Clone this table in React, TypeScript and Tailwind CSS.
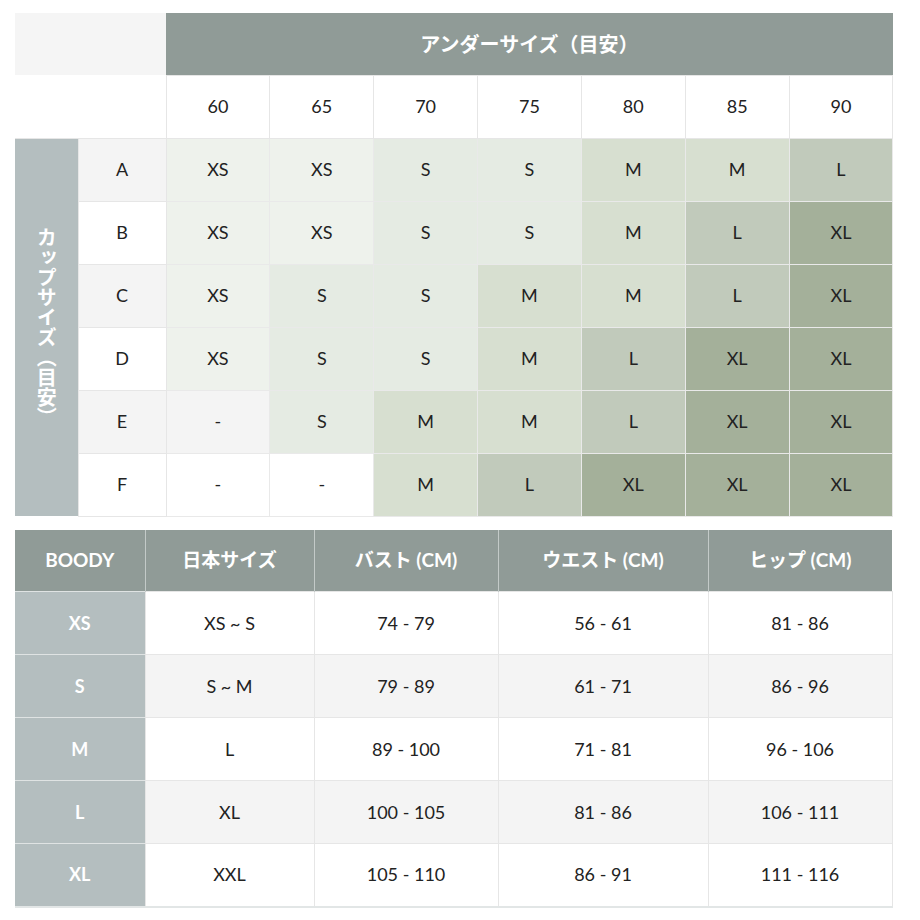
import React from 'react';

const SHADE: Record<string, string> = {
  XS: 'bg-[#eef2ec]',
  S: 'bg-[#e5ebe3]',
  M: 'bg-[#d7dfd0]',
  L: 'bg-[#c1cabb]',
  XL: 'bg-[#a4b09a]',
};

const UNDER = ['60', '65', '70', '75', '80', '85', '90'];

const CUPS: [string, string[]][] = [
  ['A', ['XS', 'XS', 'S', 'S', 'M', 'M', 'L']],
  ['B', ['XS', 'XS', 'S', 'S', 'M', 'L', 'XL']],
  ['C', ['XS', 'S', 'S', 'M', 'M', 'L', 'XL']],
  ['D', ['XS', 'S', 'S', 'M', 'L', 'XL', 'XL']],
  ['E', ['-', 'S', 'M', 'M', 'L', 'XL', 'XL']],
  ['F', ['-', '-', 'M', 'L', 'XL', 'XL', 'XL']],
];

const BODY = [
  ['XS', 'XS ~ S', '74 - 79', '56 - 61', '81 - 86'],
  ['S', 'S ~ M', '79 - 89', '61 - 71', '86 - 96'],
  ['M', 'L', '89 - 100', '71 - 81', '96 - 106'],
  ['L', 'XL', '100 - 105', '81 - 86', '106 - 111'],
  ['XL', 'XXL', '105 - 110', '86 - 91', '111 - 116'],
];

const font = "font-['Lato','Noto_Sans_CJK_JP',sans-serif]";

const App: React.FC = () => {
  return (
    <div className={`bg-white w-[920px] h-[920px] pt-[13px] pl-[15px] ${font} text-[#222]`}>
      <table className="border-collapse table-fixed w-[878px] text-[18px]">
        <colgroup>
          <col className="w-[63px]" />
          <col className="w-[88px]" />
          {UNDER.map(u => <col key={u} className="w-[103.857px]" />)}
        </colgroup>
        <tbody>
          <tr className="h-[62px]">
            <td colSpan={2} className="bg-[#f5f5f5]" />
            <td colSpan={7} className="bg-[#909b97] text-white font-bold text-[20px] text-center">
              アンダーサイズ（目安）
            </td>
          </tr>
          <tr className="h-[63px]">
            <td colSpan={2} className="bg-white border-b border-[#e6e6e6]" />
            {UNDER.map(u => (
              <td key={u} className="border border-[#e6e6e6] text-center">{u}</td>
            ))}
          </tr>
          {CUPS.map(([cup, sizes], i) => {
            const stripe = i % 2 === 0 ? 'bg-[#f4f4f4]' : 'bg-white';
            return (
              <tr key={cup} className="h-[63px]">
                {i === 0 && (
                  <td rowSpan={6} className="bg-[#b4bebf] text-white font-bold text-[20px] align-middle">
                    <div className="flex justify-center">
                      <span className="[writing-mode:vertical-rl]">カップサイズ（目安）</span>
                    </div>
                  </td>
                )}
                <td className={`${stripe} border border-[#e6e6e6] text-center`}>{cup}</td>
                {sizes.map((s, j) => (
                  <td key={j} className={`${SHADE[s] ?? stripe} border border-[#e9e9e9] text-center`}>{s}</td>
                ))}
              </tr>
            );
          })}
        </tbody>
      </table>

      <table className="border-collapse table-fixed w-[877px] mt-[13px] text-[18px]">
        <colgroup>
          <col className="w-[130px]" />
          <col className="w-[169px]" />
          <col className="w-[184px]" />
          <col className="w-[210px]" />
          <col className="w-[184px]" />
        </colgroup>
        <thead>
          <tr className="h-[62px] bg-[#909b97] text-white text-[19px]">
            {['BOODY', '日本サイズ', 'バスト (CM)', 'ウエスト (CM)', 'ヒップ (CM)'].map(h => (
              <th key={h} className="font-bold border-x border-[#c3cac8] first:border-l-0 last:border-r-0">{h}</th>
            ))}
          </tr>
        </thead>
        <tbody className="border-b-2 border-[#e2e6e6]">
          {BODY.map((row, i) => {
            const stripe = i % 2 === 0 ? 'bg-white' : 'bg-[#f4f4f4]';
            return (
              <tr key={row[0]} className="h-[63px]">
                <td className="bg-[#b4bebf] text-white font-bold text-center border-t border-[#dfe3e3]">{row[0]}</td>
                {row.slice(1).map((c, j) => (
                  <td key={j} className={`${stripe} border border-[#e6e6e6] text-center`}>{c}</td>
                ))}
              </tr>
            );
          })}
        </tbody>
      </table>
    </div>
  );
};

export default App;
